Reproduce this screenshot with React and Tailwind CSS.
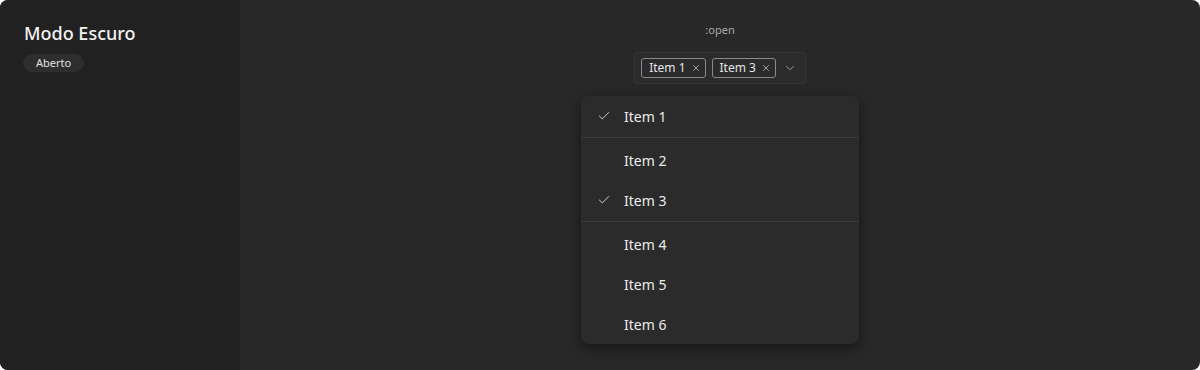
import { Check, X, ChevronDown } from 'lucide-react';

const items = [
  { id: 1, label: 'Item 1', checked: true, divider: true },
  { id: 2, label: 'Item 2' },
  { id: 3, label: 'Item 3', checked: true, divider: true },
  { id: 4, label: 'Item 4' },
  { id: 5, label: 'Item 5' },
  { id: 6, label: 'Item 6' },
];

function Chip({ label }) {
  return (
    <span className="flex items-center gap-[5px] h-[20px] pl-[7px] pr-[4px] border border-[#8a8a8a] rounded-[3px] text-[12px] text-[#e6e6e6]">
      {label}
      <X size={10} strokeWidth={1.7} className="text-[#d0d0d0]" />
    </span>
  );
}

export default function App() {
  return (
    <div className="w-[1200px] h-[370px] bg-white" style={{ fontFamily: '"Noto Sans", "Open Sans", sans-serif' }}>
      <div className="flex h-full rounded-[8px] overflow-hidden bg-[#282828]">
        {/* sidebar */}
        <aside className="w-[240px] shrink-0 bg-[#212121] px-[24px] pt-[20px]">
          <h1 className="text-[18px] leading-[26px] font-medium text-[#f2f2f2]">Modo Escuro</h1>
          <span className="inline-block mt-[8px] -ml-px px-[13px] h-[18px] leading-[18px] rounded-full bg-[#2e2e2e] text-[11px] text-[#e0e0e0]">
            Aberto
          </span>
        </aside>

        {/* main */}
        <main className="flex-1 flex flex-col items-center pt-[22px]">
          <p className="text-[11px] leading-[16px] text-[#a8a8a8]">:open</p>

          <div className="mt-[14px] flex items-center h-[32px] pl-[6px] pr-[8px] gap-[6px] bg-[#2b2b2b] border border-[#353535] rounded-[3px]">
            <Chip label="Item 1" />
            <Chip label="Item 3" />
            <ChevronDown size={14} strokeWidth={1.4} className="ml-[1px] text-[#b0b0b0]" />
          </div>

          <div className="mt-[12px] w-[278px] bg-[#2b2b2b] rounded-[8px] shadow-[0_4px_14px_rgba(0,0,0,0.45)]">
            {items.map((it) => (
              <div key={it.id}>
                <div className="flex items-center h-[40px] pl-[16px] text-[14px] text-[#ececec]">
                  <span className="w-[27px] flex">
                    {it.checked && <Check size={14} strokeWidth={1.6} className="text-[#d8d8d8]" />}
                  </span>
                  {it.label}
                </div>
                {it.divider && <div className="h-px bg-[#3b3b3b] mt-px mb-[2px]" />}
              </div>
            ))}
          </div>
        </main>
      </div>
    </div>
  );
}
